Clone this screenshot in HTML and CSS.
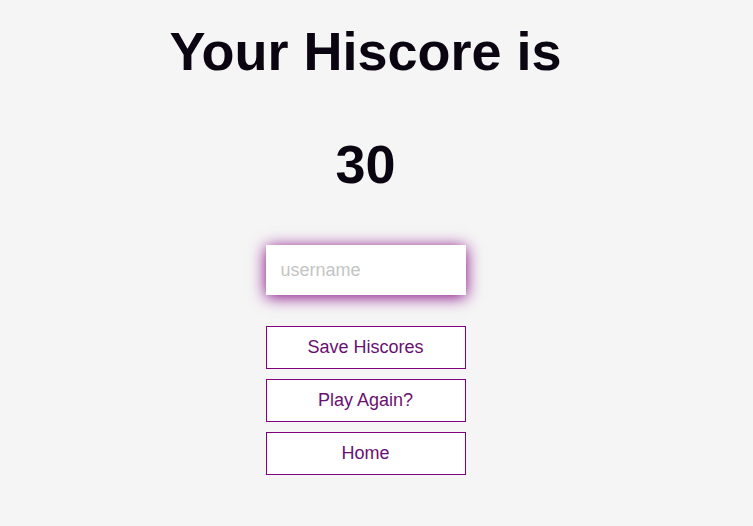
FILE: index.html
```html
<!DOCTYPE html>
<html>
<head>
<meta charset="utf-8">
<link rel="stylesheet" href="styles.css">
</head>
<body>
<main class="page">
  <h1 class="title">Your Hiscore is</h1>
  <h1 class="score">30</h1>
  <form class="form">
    <input class="name" type="text" placeholder="username">
    <div class="buttons">
      <button class="btn" type="button">Save Hiscores</button>
      <button class="btn" type="button">Play Again?</button>
      <button class="btn" type="button">Home</button>
    </div>
  </form>
</main>
</body>
</html>
```
FILE: styles.css
```css
html, body {
  margin: 0;
  padding: 0;
  background: #f5f5f5;
  font-family: "Liberation Sans", Arial, sans-serif;
}
.page {
  display: flex;
  flex-direction: column;
  align-items: center;
  padding: 21px 22px 0 0;
}
.title, .score {
  margin: 0;
  font-size: 54px;
  line-height: 61px;
  font-weight: bold;
  color: #0a0510;
}
.score {
  margin-top: 52px;
}
.form {
  margin-top: 50px;
  display: flex;
  flex-direction: column;
  align-items: center;
}
.name {
  box-sizing: border-box;
  width: 200px;
  height: 50px;
  border: none;
  outline: none;
  background: #fff;
  padding: 0 15px;
  font-family: "Liberation Sans", Arial, sans-serif;
  font-size: 18px;
  box-shadow: 0 2px 15px #800080;
}
.name::placeholder {
  color: #c4c4c4;
}
.buttons {
  margin-top: 31px;
  display: flex;
  flex-direction: column;
  gap: 10px;
}
.btn {
  box-sizing: border-box;
  width: 200px;
  height: 43px;
  background: #fff;
  border: 1px solid #800080;
  border-radius: 0;
  color: #6a1070;
  font-family: "Liberation Sans", Arial, sans-serif;
  font-size: 18px;
  padding: 0;
}
```
